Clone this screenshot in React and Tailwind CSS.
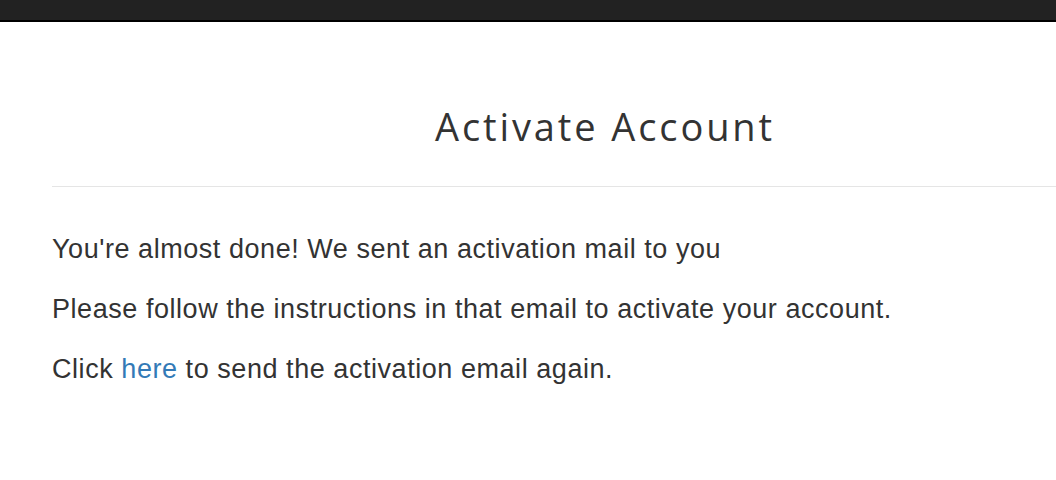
export default function App() {
  return (
    <div className="min-h-[480px] bg-white overflow-hidden">
      {/* TOP BAR */}
      <div className="h-[22px] bg-[#222222] border-b-2 border-black" />

      {/* CONTENT */}
      <div className="w-[1106px] ml-[52px]">
        <h1
          className="text-center text-[38px] leading-none text-[#333333] pt-[85px] pb-[41px] border-b border-[#e5e5e5] tracking-[2.9px]"
          style={{ fontFamily: '"Open Sans", "Liberation Sans", sans-serif' }}
        >
          Activate Account
        </h1>

        <div
          className="text-[27px] leading-[34px] text-[#333333] pt-[45px] flex flex-col gap-[26px] tracking-[0.55px]"
          style={{ fontFamily: '"Liberation Sans", Arial, sans-serif' }}
        >
          <p>You're almost done! We sent an activation mail to you</p>
          <p>Please follow the instructions in that email to activate your account.</p>
          <p>
            Click <a href="#" className="text-[#337ab7]">here</a> to send the activation email again.
          </p>
        </div>
      </div>
    </div>
  );
}
